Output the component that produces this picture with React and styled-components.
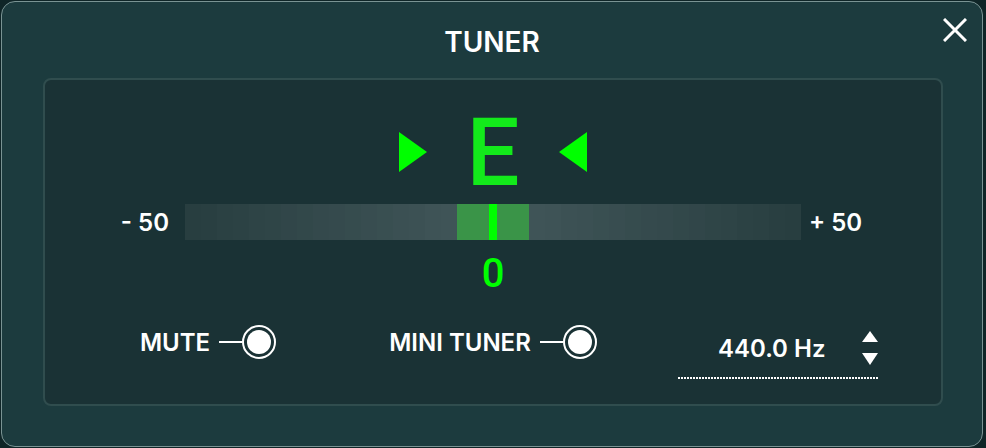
import React from "react";
import styled, { createGlobalStyle } from "styled-components";

const GlobalStyle = createGlobalStyle`
  html, body {
    margin: 0;
    padding: 0;
    background: #0f2527;
    font-family: "Inter", "Liberation Sans", sans-serif;
  }
`;

const CELL = 16;
const SIDE_CELLS = 17;

const mix = (a, b, t) =>
  `rgb(${a.map((v, i) => Math.round(v + (b[i] - v) * t)).join(",")})`;

const EDGE = [40, 62, 64];
const INNER = [63, 84, 87];

const TunerDialog = () => {
  const cells = Array.from({ length: SIDE_CELLS }, (_, i) =>
    mix(EDGE, INNER, i / (SIDE_CELLS - 1))
  );

  return (
    <Dialog>
      <Header>
        <span />
        <Title>TUNER</Title>
        <CloseButton aria-label="close">
          <svg width="24" height="24" viewBox="0 0 24 24">
            <path d="M1 1 L23 23 M23 1 L1 23" stroke="#fff" strokeWidth="3" fill="none" />
          </svg>
        </CloseButton>
      </Header>

      <Panel>
        <NoteRow>
          <Arrow viewBox="0 0 28 40">
            <polygon points="0,0 28,20 0,40" />
          </Arrow>
          <Note>E</Note>
          <Arrow viewBox="0 0 28 40">
            <polygon points="28,0 0,20 28,40" />
          </Arrow>
        </NoteRow>

        <MeterRow>
          <RangeLabel $side="left">- 50</RangeLabel>
          <Meter>
            {cells.map((c, i) => (
              <Cell key={"l" + i} style={{ background: c }} />
            ))}
            <InTune>
              <Needle />
            </InTune>
            {cells
              .slice()
              .reverse()
              .map((c, i) => (
                <Cell key={"r" + i} style={{ background: c }} />
              ))}
          </Meter>
          <RangeLabel $side="right">+ 50</RangeLabel>
        </MeterRow>

        <Cents>0</Cents>

        <Controls>
          <Toggle>
            <ToggleLabel>MUTE</ToggleLabel>
            <Lead />
            <Knob />
          </Toggle>
          <Toggle>
            <ToggleLabel>MINI TUNER</ToggleLabel>
            <Lead />
            <Knob />
          </Toggle>
          <FreqField>
            <FreqValue>440.0 Hz</FreqValue>
            <Spinner>
              <svg width="16" height="11" viewBox="0 0 16 11">
                <polygon points="8,0 16,11 0,11" fill="#fff" />
              </svg>
              <svg width="16" height="12" viewBox="0 0 16 12">
                <polygon points="0,0 16,0 8,12" fill="#fff" />
              </svg>
            </Spinner>
          </FreqField>
        </Controls>
      </Panel>
    </Dialog>
  );
};

export default function App() {
  return (
    <>
      <GlobalStyle />
      <TunerDialog />
    </>
  );
}

const Dialog = styled.div`
  box-sizing: border-box;
  margin: 1px 0 0 1px;
  width: 982px;
  height: 446px;
  background: #1c3b3e;
  border: 1px solid #7a9393;
  border-radius: 14px;
  display: flex;
  flex-direction: column;
`;

const Header = styled.div`
  display: grid;
  grid-template-columns: 1fr auto 1fr;
  align-items: start;
  height: 76px;
  padding: 0 15px;
`;

const Title = styled.h1`
  margin: 26px 0 0;
  font-size: 28px;
  line-height: 28px;
  font-weight: 600;
  color: #fff;
`;

const CloseButton = styled.button`
  justify-self: end;
  margin-top: 16px;
  width: 24px;
  height: 24px;
  padding: 0;
  border: none;
  background: none;
  display: flex;
  cursor: pointer;
`;

const Panel = styled.div`
  box-sizing: border-box;
  width: 900px;
  height: 328px;
  margin-left: 41px;
  background: #1a3235;
  border: 2px solid #304d4e;
  border-radius: 8px;
  display: flex;
  flex-direction: column;
  align-items: center;
`;

const NoteRow = styled.div`
  margin-top: 26px;
  height: 94px;
  display: flex;
  align-items: center;
  justify-content: center;
`;

const Arrow = styled.svg`
  width: 28px;
  height: 40px;
  fill: #00ff00;
  margin-top: -2px;
`;

const Note = styled.span`
  width: 132px;
  text-align: center;
  font-family: "Roboto", "Liberation Sans", sans-serif;
  font-size: 94px;
  line-height: 94px;
  font-weight: 500;
  color: #13ea1b;
`;

const MeterRow = styled.div`
  margin-top: 4px;
  width: 100%;
  display: grid;
  grid-template-columns: 1fr 616px 1fr;
  align-items: center;
`;

const RangeLabel = styled.span`
  justify-self: ${(p) => (p.$side === "left" ? "end" : "start")};
  margin: ${(p) => (p.$side === "left" ? "0 16px 0 0" : "0 0 0 8px")};
  font-size: 24px;
  font-weight: 600;
  color: #fff;
`;

const Meter = styled.div`
  height: 36px;
  display: flex;
`;

const Cell = styled.div`
  width: ${CELL}px;
  flex: none;
`;

const InTune = styled.div`
  width: 72px;
  flex: none;
  background: #3a9448;
  display: flex;
  justify-content: center;
`;

const Needle = styled.div`
  width: 8px;
  background: #00ff00;
`;

const Cents = styled.div`
  margin-top: 14px;
  font-family: "Roboto", "Liberation Sans", sans-serif;
  font-size: 40px;
  line-height: 40px;
  font-weight: 500;
  color: #00ff00;
`;

const Controls = styled.div`
  margin-top: 31px;
  display: grid;
  grid-template-columns: repeat(3, 285px);
  justify-items: center;
  align-items: start;
`;

const Toggle = styled.div`
  display: flex;
  align-items: center;
  height: 34px;
`;

const ToggleLabel = styled.span`
  font-size: 24px;
  font-weight: 600;
  color: #fff;
  margin-right: 9px;
`;

const Lead = styled.div`
  width: 23px;
  height: 2px;
  background: #fff;
`;

const Knob = styled.div`
  box-sizing: border-box;
  width: 34px;
  height: 34px;
  border: 2px solid #fff;
  border-radius: 50%;
  display: flex;
  align-items: center;
  justify-content: center;

  &::after {
    content: "";
    width: 24px;
    height: 24px;
    border-radius: 50%;
    background: #fff;
  }
`;

const FreqField = styled.div`
  box-sizing: border-box;
  width: 200px;
  margin-top: 6px;
  padding: 0 0 14px 40px;
  display: flex;
  align-items: center;
  background-image: linear-gradient(to right, #fff 2px, transparent 2px);
  background-size: 3px 2px;
  background-repeat: repeat-x;
  background-position: left bottom;
`;

const FreqValue = styled.span`
  font-size: 24px;
  line-height: 25px;
  font-weight: 600;
  color: #fff;
  flex: 1;
`;

const Spinner = styled.div`
  display: flex;
  flex-direction: column;
  gap: 11px;
`;
